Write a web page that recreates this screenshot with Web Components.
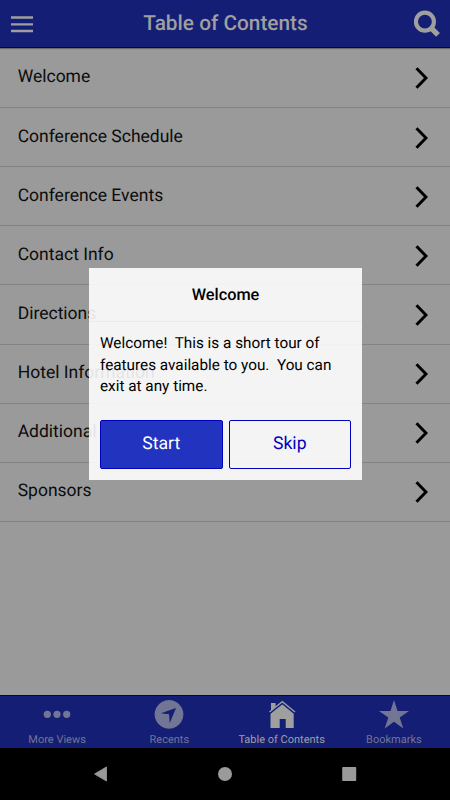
<!DOCTYPE html>
<html lang="en">
<head>
<meta charset="utf-8">
<title>Table of Contents</title>
<style>
  :root {
    --bar: #141e75;
    --bar-edge: #03035f;
    --surface: #9a9a9a;
    --line: #838383;
    --muted: #727594;
    --primary: #2233c0;
    --primary-edge: #0000c0;
  }
  body {
    margin: 0;
    font-family: Roboto, "Liberation Sans", sans-serif;
    text-rendering: geometricPrecision;
    background: #000;
  }
</style>
</head>
<body>
<conference-app></conference-app>

<script>
class AppHeader extends HTMLElement {
  constructor() {
    super();
    this.attachShadow({ mode: "open" });
  }
  connectedCallback() {
    this.shadowRoot.innerHTML = `
      <style>
        :host {
          display: flex;
          align-items: center;
          justify-content: space-between;
          box-sizing: border-box;
          height: 48px;
          padding: 0 10px 0 11px;
          background: var(--bar);
          border-bottom: 1px solid var(--bar-edge);
          box-shadow: 0 1px 1px rgba(0, 0, 0, .3);
          color: #9f9f9f;
        }
        svg { display: block; }
        h1 {
          margin: 0;
          font-size: 20.800px;
          font-weight: 500;
          line-height: 46px;
        }
      </style>
      <svg width="26" height="18" viewBox="0 0 26 18">
        <path d="M0 2.500h22M0 9.300h22M0 16h22" stroke="currentColor" stroke-width="2.300"/>
      </svg>
      <h1><slot></slot></h1>
      <svg width="26" height="27" viewBox="0 0 26 27" fill="none" stroke="currentColor">
        <circle cx="10.900" cy="11.700" r="9" stroke-width="4.200"/>
        <path d="M17 17.800L24 24.800" stroke-width="5.400"/>
      </svg>
    `;
  }
}

class TocRow extends HTMLElement {
  constructor() {
    super();
    this.attachShadow({ mode: "open" });
  }
  connectedCallback() {
    this.shadowRoot.innerHTML = `
      <style>
        :host {
          display: flex;
          align-items: center;
          justify-content: space-between;
          box-sizing: border-box;
          height: 59.150px;
          padding: 0 22px 0 17.700px;
          border-bottom: 1px solid var(--line);
          color: #0c0c0c;
          font-size: 17.500px;
          line-height: 24px;
        }
        span { margin-bottom: 1px; }
        svg { margin-top: 1px; }
      </style>
      <span><slot></slot></span>
      <svg width="13" height="22" viewBox="0 0 13 22">
        <path d="M1.500 1.300L11 11l-9.500 9.700" fill="none" stroke="#000" stroke-width="3"/>
      </svg>
    `;
  }
}

class TabItem extends HTMLElement {
  constructor() {
    super();
    this.attachShadow({ mode: "open" });
  }
  connectedCallback() {
    this.shadowRoot.innerHTML = `
      <style>
        :host {
          flex: 1;
          display: flex;
          flex-direction: column;
          align-items: center;
          color: var(--muted);
          font-size: 11px;
          line-height: 14px;
        }
        :host([active]) { color: #9f9f9f; }
        .icon { height: 30px; margin: 3px 0 4px; }
      </style>
      <div class="icon"><slot name="icon"></slot></div>
      <slot></slot>
    `;
  }
}

class TourButton extends HTMLElement {
  constructor() {
    super();
    this.attachShadow({ mode: "open" });
  }
  connectedCallback() {
    this.shadowRoot.innerHTML = `
      <style>
        :host { flex: 1; display: flex; }
        button {
          flex: 1;
          height: 49px;
          padding: 0 0 1px;
          border: 1px solid var(--primary-edge);
          border-radius: 2px;
          background: none;
          color: var(--primary-edge);
          font: 17.600px Roboto, sans-serif;
          text-rendering: inherit;
        }
        :host([filled]) button {
          background: var(--primary);
          color: #fff;
        }
      </style>
      <button><slot></slot></button>
    `;
  }
}

class TourDialog extends HTMLElement {
  constructor() {
    super();
    this.attachShadow({ mode: "open" });
  }
  connectedCallback() {
    this.shadowRoot.innerHTML = `
      <style>
        :host {
          display: block;
          box-sizing: border-box;
          width: 273px;
          height: 212px;
          background: rgba(255, 255, 255, .89);
          color: #000;
        }
        h2 {
          box-sizing: border-box;
          height: 54px;
          margin: 0;
          border-bottom: 1px solid #ebebeb;
          text-align: center;
          font-size: 16.300px;
          font-weight: 500;
          line-height: 54px;
        }
        p {
          margin: 11px 11px 21.900px;
          font-size: 15.300px;
          line-height: 21.700px;
          white-space: pre;
        }
        .actions { display: flex; gap: 6px; padding: 0 11px; }
      </style>
      <h2>${this.getAttribute("heading")}</h2>
      <p><slot></slot></p>
      <div class="actions"><slot name="actions"></slot></div>
    `;
  }
}

// Android system navigation strip
class SystemNav extends HTMLElement {
  constructor() {
    super();
    this.attachShadow({ mode: "open" });
  }
  connectedCallback() {
    this.shadowRoot.innerHTML = `
      <style>
        :host {
          display: flex;
          align-items: center;
          justify-content: space-between;
          box-sizing: border-box;
          height: 52px;
          padding: 0 93px;
          background: #000;
        }
        svg { display: block; fill: #9a9a9a; }
      </style>
      <svg width="15" height="16" viewBox="0 0 15 16"><path d="M1.500 8L13.500 .9v14.200z" stroke="#9a9a9a" stroke-linejoin="round" stroke-width=".8"/></svg>
      <svg width="14" height="14" viewBox="0 0 14 14"><circle cx="7" cy="7" r="7"/></svg>
      <svg width="15" height="14" viewBox="0 0 15 14"><rect x=".2" width="14" height="14" rx=".8"/></svg>
    `;
  }
}

class ConferenceApp extends HTMLElement {
  constructor() {
    super();
    this.attachShadow({ mode: "open" });
  }
  connectedCallback() {
    const rows = [
      "Welcome", "Conference Schedule", "Conference Events", "Contact Info",
      "Directions", "Hotel Information", "Additional Materials", "Sponsors"
    ];

    this.shadowRoot.innerHTML = `
      <style>
        :host {
          display: flex;
          flex-direction: column;
          height: 800px;
          position: relative;
          overflow: hidden;
        }
        app-header { z-index: 1; }
        main { flex: 1; padding-top: .8px; background: var(--surface); }
        nav {
          display: flex;
          box-sizing: border-box;
          height: 53px;
          padding-left: 1px;
          background: var(--bar);
          border-top: 1px solid var(--bar-edge);
        }
        nav svg { display: block; fill: currentColor; }
        /* the dialog lies over the list */
        .overlay {
          position: absolute;
          inset: 268px 0 auto 89px;
        }
      </style>
      <app-header>Table of Contents</app-header>
      <main>${rows.map(row => `<toc-row>${row}</toc-row>`).join("")}</main>
      <nav>
        <tab-item>
          <svg slot="icon" width="30" height="30" viewBox="0 0 30 30">
            <circle cx="5.300" cy="15.300" r="3.600"/><circle cx="15" cy="15.300" r="3.600"/><circle cx="24.700" cy="15.300" r="3.600"/>
          </svg>More Views</tab-item>
        <tab-item>
          <svg slot="icon" width="30" height="30" viewBox="0 0 30 30">
            <path fill-rule="evenodd" d="M15 1a14.400 14.400 0 1 0 .01 0zM22 9l-6.200 15-.8-8.800-8.200-1z"/>
          </svg>Recents</tab-item>
        <tab-item active>
          <svg slot="icon" width="30" height="30" viewBox="0 0 30 30">
            <path d="M4 4h4.500v4L4 12z"/>
            <path d="M3.500 14.500L15.300 5l11.400 9.500V29h-8v-9h-6v9H3.500z"/>
            <path d="M2.500 13L15.300 2.700 28 13" transform="translate(0 1.200)" fill="none" stroke="#141e75" stroke-width="2"/>
            <path d="M2.500 13L15.300 2.700 28 13" fill="none" stroke="currentColor" stroke-width="1.400"/>
          </svg>Table of Contents</tab-item>
        <tab-item>
          <svg slot="icon" width="30" height="30" viewBox="0 0 30 30">
            <path d="M15 1l3.500 10.900H30l-9.300 6.700L24.300 29.500 15 22.800 5.700 29.500l3.600-10.900L0 11.900h11.500z"/>
          </svg>Bookmarks</tab-item>
      </nav>
      <system-nav></system-nav>
      <div class="overlay">
        <tour-dialog heading="Welcome">Welcome!  This is a short tour of
features available to you.  You can
exit at any time.<tour-button slot="actions" filled>Start</tour-button><tour-button slot="actions">Skip</tour-button></tour-dialog>
      </div>
    `;
  }
}

customElements.define("app-header", AppHeader);
customElements.define("toc-row", TocRow);
customElements.define("tab-item", TabItem);
customElements.define("tour-button", TourButton);
customElements.define("tour-dialog", TourDialog);
customElements.define("system-nav", SystemNav);
customElements.define("conference-app", ConferenceApp);
</script>
</body>
</html>
